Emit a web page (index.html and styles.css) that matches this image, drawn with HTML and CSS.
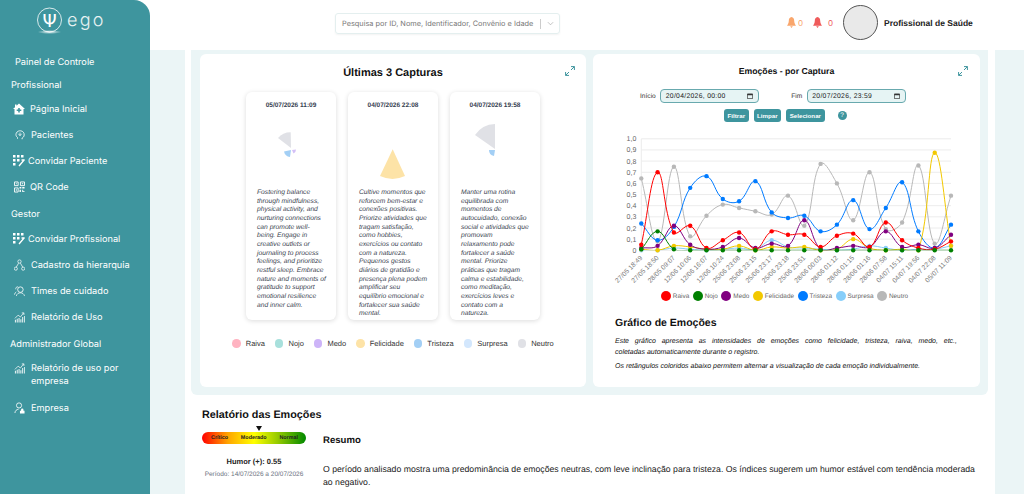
FILE: index.html
```html
<!DOCTYPE html>
<html lang="pt-BR">
<head>
    <meta charset="UTF-8">
    <meta name="viewport" content="width=device-width, initial-scale=1.0">
    <title>Ego - Painel</title>
    <link rel="stylesheet" href="styles.css">
</head>
<body>
    <svg class="icon-defs" width="0" height="0">
        <symbol id="i-invite" viewBox="0 0 12 12">
            <path d="M0 0h2.5v2.5H0zM4 0h2.5v2.5H4zM8 0h2.500v2.500H8zM0 4h2.500v2.500H0zM4 4h2.500v2.500H4zM0 8h2.500v2.500H0z" fill="#fff"/>
            <path d="M11.500 4.500 6 11M8.500 5h3" stroke="#fff" stroke-width="1.300" fill="none"/>
        </symbol>
        <symbol id="i-report" viewBox="0 0 12 12">
            <path d="M1 7.500 4.500 4 7 6l3.500-4.500M8.500 1.500h2.300v2.300" stroke="#fff" stroke-width=".8" fill="none"/>
            <path d="M1 9h1v3H1zM3 8h1v4H3zM5 7h1v5H5zM7 8.500h1V12H7zM9 6h1v6H9zM11 5h.8v7H11z" fill="#fff"/>
        </symbol>
        <symbol id="i-expand" viewBox="0 0 10 10">
            <path d="M6 .6h3.400V4M9.400 .6 6 4M.6 6v3.400H4M.6 9.400 4 6" stroke="#3e959e" stroke-width="1" fill="none"/>
        </symbol>
        <symbol id="i-calendar" viewBox="0 0 8 8">
            <path d="M.5 1.500h7v6h-7z" stroke="#333" fill="none"/>
            <path d="M.5 1h7v2h-7z" fill="#333"/>
        </symbol>
    </svg>

    <div class="layout">
        <!-- Sidebar -->
        <aside class="sidebar">
            <div class="logo">
                <svg class="logo-mark" viewBox="0 0 30 30">
                    <defs>
                        <radialGradient id="glow">
                            <stop offset="0" stop-color="#fff" stop-opacity=".9"/>
                            <stop offset="1" stop-color="#fff" stop-opacity="0"/>
                        </radialGradient>
                    </defs>
                    <circle cx="15.500" cy="15" r="12" fill="none" stroke="#fff" stroke-width=".8"/>
                    <ellipse cx="15.500" cy="27" rx="12" ry="2" fill="url(#glow)"/>
                    <text x="15.500" y="22" text-anchor="middle" class="logo-psi">Ψ</text>
                </svg>
                <span class="logo-text">ego</span>
            </div>

            <div class="nav-item nav-plain">Painel de Controle</div>
            <div class="nav-title nav-title-first">Profissional</div>
            <div class="nav-item">
                <svg class="nav-icon gap-a" viewBox="0 0 12 12"><path d="M6 .5 12 6h-1.500v5.500h-9V6H0L2 4.200V1.500h1.500v1.300z" fill="#fff"/><path d="M5.200 5h1.600v1.500h1.500v1.500H6.800v1.500H5.200V8H3.700V6.500h1.500z" fill="#3e959e"/></svg>
                Página Inicial
            </div>
            <div class="nav-item">
                <svg class="nav-icon nudge gap-b" viewBox="0 0 12 12"><path d="M3 10.500V9C1 7.500.8 5.500 1.500 3.800 2.500 1.500 5 .7 7 1c2.500.4 4.200 2.400 4 5-.1 2-1.200 3-2.500 3.600v1.500" fill="none" stroke="#fff" stroke-width="1"/><path d="M4 4.500 6 6.800 8 4.500M6 3v3.800" fill="none" stroke="#fff" stroke-width=".9"/></svg>
                Pacientes
            </div>
            <div class="nav-item">
                <svg class="nav-icon gap-c"><use href="#i-invite"/></svg>
                Convidar Paciente
            </div>
            <div class="nav-item">
                <svg class="nav-icon nudge-small gap-a" viewBox="0 0 12 12"><path d="M.5.500h4v4h-4zM7 .500h4.500v4H7zM.5 7h4v4.500h-4z" fill="none" stroke="#fff"/><path d="M2 2h1v1H2zM8.500 2h1.500v1H8.500zM2 8.500h1v1.500H2zM6 6h2v1.500H6zM9 6h2.500v1.500H9zM6 9h1.500v2.500H6zM9 9h1v1.500h1.500v1H9z" fill="#fff"/></svg>
                QR Code
            </div>

            <div class="nav-title">Gestor</div>
            <div class="nav-item">
                <svg class="nav-icon gap-c"><use href="#i-invite"/></svg>
                Convidar Profissional
            </div>
            <div class="nav-item">
                <svg class="nav-icon nudge-small gap-b" viewBox="0 0 12 12"><circle cx="6" cy="2.200" r="1.800" fill="none" stroke="#fff" stroke-width=".8"/><circle cx="2" cy="10" r="1.700" fill="none" stroke="#fff" stroke-width=".8"/><circle cx="10" cy="10" r="1.700" fill="none" stroke="#fff" stroke-width=".8"/><path d="M5 4 2.500 8.300M7 4l2.500 4.300" stroke="#fff" stroke-width=".8"/></svg>
                Cadastro da hierarquia
            </div>
            <div class="nav-item">
                <svg class="nav-icon nudge-small gap-b" viewBox="0 0 12 12"><circle cx="7" cy="4.500" r="3" fill="none" stroke="#fff" stroke-width=".9"/><path d="M2.500 11.500C3 9 5 8 7 8s4 1 4.500 3.500M4.500 1.500C3 1 1.500 2.500 2 4.200M2.500 7C1.500 7.500.7 8.500.5 10" fill="none" stroke="#fff" stroke-width=".8"/></svg>
                Times de cuidado
            </div>
            <div class="nav-item">
                <svg class="nav-icon nudge-small gap-b"><use href="#i-report"/></svg>
                Relatório de Uso
            </div>

            <div class="nav-title nav-title-admin">Administrador Global</div>
            <div class="nav-item nav-item-tall">
                <svg class="nav-icon nudge-small gap-b"><use href="#i-report"/></svg>
                <span>Relatório de uso por empresa</span>
            </div>
            <div class="nav-item">
                <svg class="nav-icon nudge-small gap-b" viewBox="0 0 12 12"><circle cx="5.500" cy="3.200" r="2.800" fill="none" stroke="#fff" stroke-width=".9"/><path d="M1 11.500C1.200 9 2.800 7.500 5 7.300" fill="none" stroke="#fff" stroke-width=".9"/><path d="M6.500 9h5v3h-5zM7.700 9V7.800a1.300 1.300 0 0 1 2.600 0V9" fill="#fff"/></svg>
                Empresa
            </div>
        </aside>

        <div class="page">
            <!-- Header -->
            <header class="topbar">
                <div class="search">
                    <span class="search-text">Pesquisa por ID, Nome, Identificador, Convênio e Idade</span>
                    <span class="search-divider"></span>
                    <svg class="search-arrow" viewBox="0 0 8 5"><path d="M1 1l3 3 3-3" fill="none" stroke="#aaa" stroke-width=".8"/></svg>
                </div>
                <div class="user">
                    <span class="alert alert-warn">
                        <svg class="bell" viewBox="0 0 10 12"><path d="M5 0C3 .2 2 2 2 4c0 2.500-1 4-2 5.500h10C9 8 8 6.500 8 4c0-2-1-3.800-3-4zM3.500 10.300h3L5 12z" fill="#f9a66c"/></svg>0
                    </span>
                    <span class="alert alert-danger">
                        <svg class="bell" viewBox="0 0 10 12"><path d="M5 0C3 .2 2 2 2 4c0 2.500-1 4-2 5.500h10C9 8 8 6.500 8 4c0-2-1-3.800-3-4zM3.500 10.300h3L5 12z" fill="#ef5b5b"/></svg>0
                    </span>
                    <span class="avatar"></span>
                    <span class="user-name">Profissional de Saúde</span>
                </div>
            </header>

            <main class="main">
                <div class="panels">
                    <!-- Last captures -->
                    <section class="panel panel-captures">
                        <svg class="expand"><use href="#i-expand"/></svg>
                        <h2 class="captures-title">Últimas 3 Capturas</h2>
                        <div class="captures">
                            <article class="capture">
                                <div class="capture-date">05/07/2026 11:09</div>
                                <svg class="capture-pie" viewBox="0 0 90 76">
                                    <path d="M45 36 32 26A16.400 16.400 0 0 1 44.700 20.300Z" fill="#e0e1e6"/>
                                    <path d="M45 38 38 39.500A7 7 0 0 0 44 45Z" fill="#a3cff5"/>
                                    <path d="M46 38 50 37.500A4.500 4.500 0 0 1 47.500 41.500Z" fill="#d4c0f7"/>
                                </svg>
                                <p class="capture-text">Fostering balance through mindfulness, physical activity, and nurturing connections can promote well-being. Engage in creative outlets or journaling to process feelings, and prioritize restful sleep. Embrace nature and moments of gratitude to support emotional resilience and inner calm.</p>
                            </article>
                            <article class="capture">
                                <div class="capture-date">04/07/2026 22:08</div>
                                <svg class="capture-pie" viewBox="0 0 90 76">
                                    <path d="M44.700 37.300 32 64A29.500 29.500 0 0 0 57 64Z" fill="#fde3a7"/>
                                </svg>
                                <p class="capture-text">Cultive momentos que reforcem bem-estar e conexões positivas. Priorize atividades que tragam satisfação, como hobbies, exercícios ou contato com a natureza. Pequenos gestos diários de gratidão e presença plena podem amplificar seu equilíbrio emocional e fortalecer sua saúde mental.</p>
                            </article>
                            <article class="capture">
                                <div class="capture-date">04/07/2026 19:58</div>
                                <svg class="capture-pie" viewBox="0 0 90 76">
                                    <path d="M45 37 25 23A25 25 0 0 1 45 12Z" fill="#e0e1e6"/>
                                    <path d="M45 38 39 38A6 6 0 0 0 44 44Z" fill="#a3cff5"/>
                                </svg>
                                <p class="capture-text">Manter uma rotina equilibrada com momentos de autocuidado, conexão social e atividades que promovam relaxamento pode fortalecer a saúde mental. Priorize práticas que tragam calma e estabilidade, como meditação, exercícios leves e contato com a natureza.</p>
                            </article>
                        </div>
                        <div class="soft-legend">
                            <span class="soft-item"><i class="soft-dot dot-raiva"></i>Raiva</span>
                            <span class="soft-item"><i class="soft-dot dot-nojo"></i>Nojo</span>
                            <span class="soft-item"><i class="soft-dot dot-medo"></i>Medo</span>
                            <span class="soft-item"><i class="soft-dot dot-felicidade"></i>Felicidade</span>
                            <span class="soft-item"><i class="soft-dot dot-tristeza"></i>Tristeza</span>
                            <span class="soft-item"><i class="soft-dot dot-surpresa"></i>Surpresa</span>
                            <span class="soft-item"><i class="soft-dot dot-neutro"></i>Neutro</span>
                        </div>
                    </section>

                    <!-- Emotion chart -->
                    <section class="panel panel-chart">
                        <svg class="expand expand-chart"><use href="#i-expand"/></svg>
                        <h2 class="chart-title">Emoções - por Captura</h2>
                        <div class="filters">
                            <label class="filter">Início
                                <span class="date-input">20/04/2026, 00:00<svg class="calendar"><use href="#i-calendar"/></svg></span>
                            </label>
                            <label class="filter">Fim
                                <span class="date-input">20/07/2026, 23:59<svg class="calendar"><use href="#i-calendar"/></svg></span>
                            </label>
                        </div>
                        <div class="actions">
                            <button class="btn">Filtrar</button>
                            <button class="btn">Limpar</button>
                            <button class="btn">Selecionar</button>
                            <span class="help">?</span>
                        </div>
                        <svg id="emotion-chart" class="chart" viewBox="0 0 387 160"></svg>
                        <div id="chart-legend" class="chart-legend"></div>
                        <div class="chart-notes">
                            <h3 class="notes-title">Gráfico de Emoções</h3>
                            <p><span class="notes-line">Este gráfico apresenta as intensidades de emoções como felicidade, tristeza, raiva, medo, etc.,</span> coletadas automaticamente durante o registro.</p>
                            <p>Os retângulos coloridos abaixo permitem alternar a visualização de cada emoção individualmente.</p>
                        </div>
                    </section>
                </div>

                <!-- Report -->
                <section class="report">
                    <h2 class="report-title">Relatório das Emoções</h2>
                    <div class="report-body">
                        <div class="humor">
                            <div class="gauge">
                                <span class="gauge-pointer"></span>
                                <span>Crítico</span><span>Moderado</span><span>Normal</span>
                            </div>
                            <div class="humor-value">Humor (+): 0.55</div>
                            <div class="humor-period">Período: 14/07/2026 a 20/07/2026</div>
                        </div>
                        <div class="summary">
                            <h3 class="summary-title">Resumo</h3>
                            <p>O período analisado mostra uma predominância de emoções neutras, com leve inclinação para tristeza. Os índices sugerem um humor estável com tendência moderada ao negativo.</p>
                        </div>
                    </div>
                </section>
            </main>
        </div>
    </div>

    <script src="chart.js"></script>
</body>
</html>
```

FILE: styles.css
```css
* {
    box-sizing: border-box;
}
body {
    font-family: "Liberation Sans", Arial, sans-serif;
    text-rendering: geometricPrecision;
    background-color: #fff;
    margin: 0;
    height: 494px;
    overflow: hidden;
}
h2, h3, p {
    margin: 0;
}
.icon-defs {
    position: absolute;
}
.layout {
    display: flex;
    height: 494px;
}

/* sidebar */
.sidebar {
    width: 150px;
    flex-shrink: 0;
    background-color: #3e959e;
    border-top-right-radius: 16px;
    color: #fff;
    font-family: Inter, "Liberation Sans", sans-serif;
    font-size: 9.2px;
}
.logo {
    height: 49px;
    display: flex;
    align-items: flex-start;
    padding: 5px 0 0 34px;
}
.logo-mark {
    width: 30px;
    height: 30px;
}
.logo-psi {
    font-family: "DejaVu Sans", sans-serif;
    font-size: 18px;
    fill: #fff;
}
.logo-text {
    font-size: 18px;
    font-weight: 300;
    letter-spacing: 2.2px;
    margin: 5px 0 0 3px;
    color: #e8f3f3;
}
.nav-item {
    height: 26px;
    display: flex;
    align-items: center;
    padding-left: 13px;
}
.nav-plain {
    padding-left: 15px;
}
.nav-item-tall {
    height: 39px;
    align-items: flex-start;
    padding-top: 6px;
    padding-right: 20px;
    line-height: 13px;
}
.nav-title {
    height: 26px;
    padding: 4px 0 0 11px;
    line-height: 22px;
}
.nav-title-first {
    height: 21px;
    padding-top: 0;
    line-height: 21px;
}
.nav-title-admin {
    padding-left: 10px;
}
.nav-icon {
    width: 12px;
    height: 12px;
    flex-shrink: 0;
}
.nudge {
    margin-left: 2px;
    width: 10px;
}
.nudge-small {
    margin-left: 1px;
    width: 11px;
}
.gap-a {
    margin-right: 5px;
}
.gap-b {
    margin-right: 6px;
}
.gap-c {
    margin-right: 3px;
}

/* header */
.page {
    flex: 1;
    min-width: 0;
}
.topbar {
    height: 50px;
    background-color: #fff;
    display: flex;
    align-items: flex-start;
    padding-left: 185px;
}
.search {
    width: 225px;
    height: 21px;
    margin-top: 13px;
    border: 1px solid #e4efef;
    border-radius: 3px;
    box-shadow: 0 1px 2px rgba(0, 0, 0, 0.05);
    display: flex;
    align-items: center;
    padding-left: 6px;
    font-family: Inter, sans-serif;
    font-size: 7.35px;
    color: #777;
}
.search-text {
    width: 198px;
    white-space: nowrap;
}
.search-divider {
    width: 1px;
    height: 10px;
    background-color: #ccc;
    margin: 0 6px 0 0;
}
.search-arrow {
    width: 7px;
    height: 5px;
}
.user {
    display: flex;
    align-items: center;
    height: 35px;
    margin: 5px 0 0 227px;
}
.alert {
    display: flex;
    align-items: center;
    gap: 2px;
    width: 26px;
    font-family: Inter, sans-serif;
    font-size: 8px;
}
.alert-warn {
    color: #f9a66c;
}
.alert-danger {
    color: #ef5b5b;
    width: 30px;
}
.alert-danger .bell {
    margin-right: 4px;
}
.bell {
    width: 9px;
    height: 11px;
}
.avatar {
    width: 35px;
    height: 35px;
    border-radius: 50%;
    background-color: #e9e9e9;
    border: 1px solid #555;
}
.user-name {
    margin-left: 6px;
    font-weight: bold;
    font-size: 8.5px;
    color: #222;
    white-space: nowrap;
}

/* main area */
.main {
    height: 444px;
    background-color: #fff;
    box-shadow: -35px 0 0 #ebf5f6, 29px 0 0 #ebf5f6;
    margin: 0 29px 0 35px;
}
.panels {
    height: 345px;
    margin: 0 7px 0 6px;
    padding: 4px 8px 8px 9px;
    display: flex;
    gap: 7px;
    background-color: #ebf5f6;
    border-radius: 0 0 6px 6px;
}
.panel {
    position: relative;
    background-color: #fff;
    border-radius: 6px;
}
.panel-captures {
    width: 386px;
}
.panel-chart {
    width: 387px;
}
.expand {
    position: absolute;
    top: 12px;
    right: 11px;
    width: 10px;
    height: 10px;
}
.expand-chart {
    right: 12px;
}

/* captures */
.captures-title {
    height: 26px;
    padding-top: 12px;
    font-size: 11px;
    line-height: 14px;
    text-align: center;
    color: #111;
}
.captures {
    display: flex;
    justify-content: center;
    gap: 12px;
    margin-top: 12px;
}
.capture {
    width: 90px;
    height: 228px;
    background-color: #fff;
    border-radius: 6px;
    box-shadow: 0 1px 5px rgba(0, 0, 0, 0.14);
}
.capture-date {
    height: 20px;
    padding-top: 9px;
    line-height: 10px;
    font-size: 6.5px;
    font-weight: bold;
    text-align: center;
    color: #374151;
}
.capture-pie {
    display: block;
    width: 90px;
    height: 76px;
}
.capture-text {
    padding: 1px 9.500px 0 11px;
    font-size: 6.7px;
    line-height: 8.67px;
    font-style: italic;
    color: #3a4350;
}
.soft-legend {
    display: flex;
    justify-content: center;
    gap: 10px;
    margin-top: 19px;
    font-size: 7.5px;
    color: #333;
}
.soft-item {
    display: flex;
    align-items: center;
    gap: 5px;
}
.soft-dot {
    width: 8.5px;
    height: 8.5px;
    border-radius: 50%;
}
.dot-raiva { background-color: #ffb3c1; }
.dot-nojo { background-color: #a8e0dc; }
.dot-medo { background-color: #cdb4f8; }
.dot-felicidade { background-color: #fde3a7; }
.dot-tristeza { background-color: #a3cff5; }
.dot-surpresa { background-color: #d3e7fd; }
.dot-neutro { background-color: #e0e1e6; }

/* chart panel */
.chart-title {
    padding-top: 10px;
    font-size: 8.7px;
    line-height: 14px;
    text-align: center;
    color: #111;
}
.filters {
    display: flex;
    gap: 32px;
    margin-top: 11px;
    padding-left: 47px;
}
.filter {
    display: flex;
    align-items: center;
    gap: 4.500px;
    font-size: 6.6px;
    color: #333;
}
.date-input {
    width: 99px;
    height: 14px;
    display: flex;
    align-items: center;
    justify-content: space-between;
    padding: 0 5px 0 4.500px;
    background-color: #e6f4f4;
    border: 1px solid #68a9ae;
    border-radius: 4px;
    font-size: 6.8px;
    letter-spacing: 0.3px;
    color: #222;
}
.calendar {
    width: 6px;
    height: 6px;
}
.actions {
    display: flex;
    align-items: center;
    gap: 5px;
    margin-top: 6px;
    padding-left: 131px;
}
.btn {
    height: 13px;
    padding: 0 3.500px;
    border: none;
    border-radius: 3px;
    background-color: #3e959e;
    color: #fff;
    font-family: "Liberation Sans", Arial, sans-serif;
    font-size: 6.2px;
    font-weight: bold;
}
.help {
    width: 9px;
    height: 9px;
    margin-left: 8px;
    border-radius: 50%;
    background-color: #3e959e;
    color: #fff;
    font-size: 6.5px;
    line-height: 9px;
    text-align: center;
}
.chart {
    display: block;
    width: 387px;
    height: 160px;
    margin-top: 8px;
}
.chart-legend {
    display: flex;
    justify-content: center;
    gap: 3.500px;
    height: 12px;
    padding-right: 4px;
    font-size: 6.4px;
    color: #666;
}
.legend-item {
    display: flex;
    align-items: center;
    gap: 2px;
}
.legend-dot {
    width: 10px;
    height: 10px;
    border-radius: 50%;
}
.chart-notes {
    padding: 0 23px 0 22px;
    margin-top: 14px;
    font-size: 7px;
    line-height: 11px;
    font-style: italic;
    color: #111;
}
.notes-title {
    font-size: 10.5px;
    line-height: 14px;
    font-style: normal;
    margin-bottom: 5.500px;
}
.chart-notes p {
    margin-bottom: 3px;
}
.notes-line {
    display: block;
    text-align: justify;
    text-align-last: justify;
}

/* report */
.report {
    padding: 13px 20px 0 17px;
}
.report-title {
    font-size: 10.8px;
    line-height: 14px;
    color: #111;
}
.report-body {
    display: flex;
    gap: 17px;
}
.humor {
    width: 104px;
    flex-shrink: 0;
    text-align: center;
}
.gauge {
    position: relative;
    height: 12px;
    margin-top: 10px;
    padding: 0 8px 0 9px;
    display: flex;
    align-items: center;
    justify-content: space-between;
    border-radius: 6px;
    background: linear-gradient(to right, #f00, #ffa500 25%, #ff0 50%, #9c0 72%, #080);
    font-size: 5.4px;
    font-weight: bold;
    color: #222;
}
.gauge-pointer {
    position: absolute;
    top: -6px;
    left: 54px;
    border-left: 3px solid transparent;
    border-right: 3px solid transparent;
    border-top: 5px solid #111;
}
.humor-value {
    margin-top: 12px;
    font-size: 7.5px;
    line-height: 12px;
    font-weight: bold;
    color: #222;
}
.humor-period {
    margin-top: 2px;
    font-size: 6.5px;
    line-height: 10px;
    color: #6b7280;
    white-space: nowrap;
}
.summary {
    flex: 1;
    padding-top: 12px;
}
.summary-title {
    font-size: 9.6px;
    line-height: 14px;
    color: #111;
}
.summary p {
    margin-top: 15px;
    font-size: 8.7px;
    line-height: 12.500px;
    color: #222;
}
```

FILE: chart.js
```js
const labels = ['27/05 18:49', '27/05 18:50', '28/05 09:07', '12/06 10:06', '12/06 16:07', '12/06 10:24', '25/06 23:08',
    '25/06 23:15', '25/06 23:17', '25/06 23:18', '25/06 23:51', '28/06 00:03', '28/06 01:12', '28/06 01:15',
    '28/06 01:16', '28/06 07:58', '04/07 15:11', '04/07 19:56', '04/07 22:08', '05/07 11:09'];

// drawn back to front, legend keeps its own order below
const series = {
    Neutro: { color: '#b8b8b8', data: [.645, .08, .75, .125, .31, .41, .38, .35, .32, .49, .22, .775, .6, .27, .7, .19, .25, .76, .06, .49] },
    Surpresa: { color: '#87cefa', data: [0, 0, .02, .01, 0, .01, .02, .01, .09, .03, .02, .01, 0, .01, .04, .02, 0, .01, .01, .04] },
    Tristeza: { color: '#007bff', data: [.24, .09, .21, .56, .665, .46, .44, .62, .34, .29, .31, .17, .23, .45, .19, .38, .61, .17, .02, .23] },
    Felicidade: { color: '#f2c800', data: [.01, 0, .04, .03, .01, .01, .04, 0, .03, .02, .03, 0, .01, .1, .02, 0, .01, 0, .875, .04] },
    Medo: { color: '#800080', data: [.02, .04, .22, .05, .01, .03, .11, .02, .06, .04, .27, .01, .02, .04, .03, .17, .03, .05, .02, .14] },
    Raiva: { color: '#ff0000', data: [.05, .7, .16, .22, .02, .09, .16, .01, .17, .14, .14, .03, .13, .15, .03, .25, .09, .02, .01, .08] },
    Nojo: { color: '#008000', data: [.01, .17, .01, 0, 0, 0, 0, 0, 0, 0, 0, 0, 0, 0, 0, 0, 0, 0, 0, 0] }
};
const legendOrder = ['Raiva', 'Nojo', 'Medo', 'Felicidade', 'Tristeza', 'Surpresa', 'Neutro'];

const plot = { left: 48.3, right: 358, top: 8.8, bottom: 120.3 };
const xAt = i => plot.left + (plot.right - plot.left) * i / (labels.length - 1);
const yAt = v => plot.bottom - (plot.bottom - plot.top) * v;

// same bezier smoothing as a tension 0.4 line chart
function smoothPath(points) {
    const tension = 0.4;
    const controls = points.map((p, i) => {
        const prev = points[i - 1] || p;
        const next = points[i + 1] || p;
        const d1 = Math.hypot(p.x - prev.x, p.y - prev.y);
        const d2 = Math.hypot(next.x - p.x, next.y - p.y);
        const sum = d1 + d2 || 1;
        return {
            inX: p.x - tension * d1 / sum * (next.x - prev.x),
            inY: p.y - tension * d1 / sum * (next.y - prev.y),
            outX: p.x + tension * d2 / sum * (next.x - prev.x),
            outY: p.y + tension * d2 / sum * (next.y - prev.y)
        };
    });
    let d = `M${points[0].x} ${points[0].y}`;
    for (let i = 1; i < points.length; i++) {
        d += `C${controls[i - 1].outX} ${controls[i - 1].outY} ${controls[i].inX} ${controls[i].inY} ${points[i].x} ${points[i].y}`;
    }
    return d;
}

let svg = `<defs><clipPath id="plot"><rect x="${plot.left - 3}" y="${plot.top - 3}" width="${plot.right - plot.left + 6}" height="${plot.bottom - plot.top + 3}"/></clipPath></defs>`;

for (let t = 0; t <= 10; t++) {
    const y = yAt(t / 10);
    const text = t === 0 ? '0' : (t / 10).toFixed(1).replace('.', ',');
    svg += `<line x1="${plot.left}" x2="${plot.right}" y1="${y}" y2="${y}" stroke="#ececec" stroke-width="1"/>`;
    svg += `<text x="${plot.left - 5}" y="${y + 2.5}" text-anchor="end" font-size="7" fill="#666">${text}</text>`;
}
svg += `<line x1="${plot.left}" x2="${plot.left}" y1="${plot.top}" y2="${plot.bottom}" stroke="#ececec" stroke-width="1"/>`;

labels.forEach((label, i) => {
    const x = xAt(i) + 1.5;
    const y = plot.bottom + 8;
    svg += `<text transform="translate(${x} ${y}) rotate(-45)" text-anchor="end" font-size="6.700" fill="#777">${label}</text>`;
});

Object.values(series).forEach(s => {
    const points = s.data.map((v, i) => ({ x: xAt(i), y: yAt(v) }));
    svg += `<path d="${smoothPath(points)}" fill="none" stroke="${s.color}" stroke-width="1" clip-path="url(#plot)"/>`;
    points.forEach(p => {
        svg += `<circle cx="${p.x}" cy="${p.y}" r="2.200" fill="${s.color}"/>`;
    });
});

document.getElementById('emotion-chart').innerHTML = svg;

document.getElementById('chart-legend').innerHTML = legendOrder.map(name =>
    `<span class="legend-item"><i class="legend-dot" style="background-color:${series[name].color}"></i>${name}</span>`
).join('');
```
